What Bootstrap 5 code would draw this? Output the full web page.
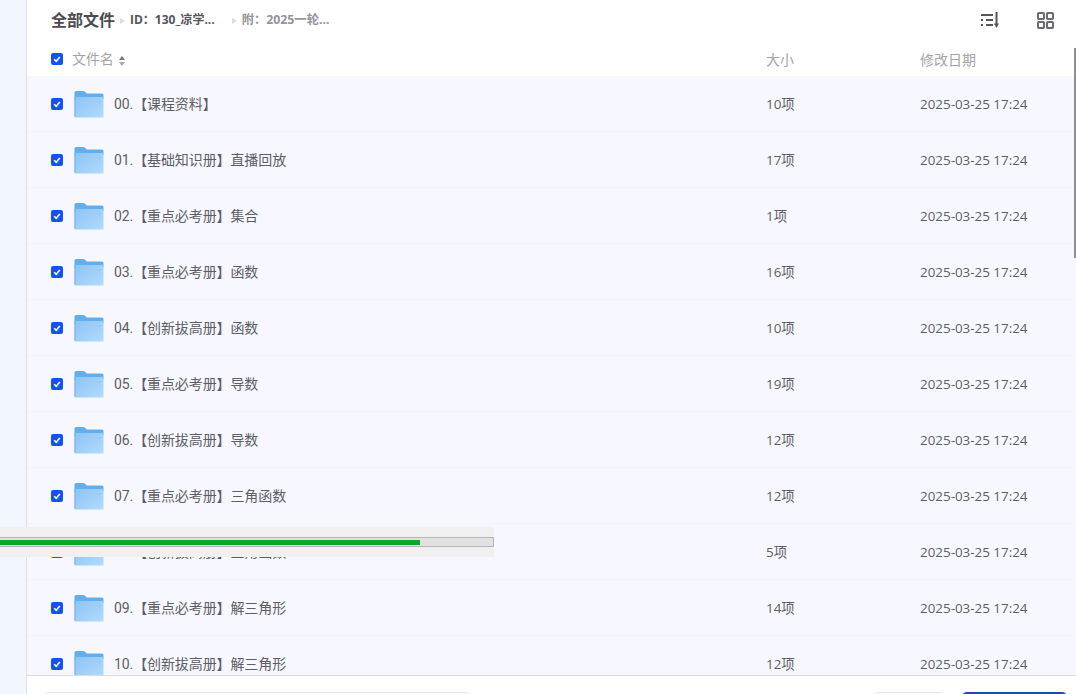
<!DOCTYPE html>
<html lang="zh-CN">
<head>
    <meta charset="UTF-8">
    <meta name="viewport" content="width=device-width, initial-scale=1.0">
    <title>全部文件</title>
    <link href="https://cdn.jsdelivr.net/npm/bootstrap@5.3.0/dist/css/bootstrap.min.css" rel="stylesheet">
    <style>
        html, body { height: 100%; overflow: hidden; }
        body { font-family: "Open Sans", "Noto Sans CJK SC", sans-serif; font-size: 13px; color: #5d5d66; background: #fff; }
        .app-shell { height: 694px; }
        .side-rail { width: 27px; background: #f2f6ff; border-right: 1px solid #e0e0e4; }
        .top-bar { height: 40px; padding: 0 22px 0 24px; }
        .crumb-root { font-size: 16px; font-weight: 700; color: #4b4b50; margin-right: 5px; }
        .crumb-item { font-size: 12px; font-weight: 700; color: #55555c; margin-right: 17px; }
        .crumb-item.muted-crumb { color: #94949a; font-size: 12.3px; }
        .crumb-arrow { width: 0; height: 0; border-top: 3.5px solid transparent; border-bottom: 3.5px solid transparent; border-left: 5px solid #dcdcdc; margin-right: 5px; margin-top: 1px; }
        .file-head { height: 36px; font-size: 14px; color: #a4a4a8; padding-top: 3px; }
        .file-list { height: 599px; overflow: hidden; background: #f7f8ff; }
        .file-row { height: 56px; padding-top: 1px; border-bottom: 1px solid #f3f3fb; }
        .col-check { width: 23px; margin-left: 24px; flex: none; line-height: 0; }
        .col-name { width: 692px; flex: none; white-space: nowrap; font-family: Roboto, "Noto Sans CJK SC", sans-serif; font-size: 14px; letter-spacing: -.1px; }
        .col-size { width: 154px; flex: none; }
        .col-date { flex: none; white-space: nowrap; }
        .file-row .col-size, .file-row .col-date { font-size: 13.4px; }
        .check-box { display: inline-block; width: 12px; height: 12px; border-radius: 2px; background: #1352f7; margin-top: -1px; }
        .folder-icon { width: 30px; height: 28px; margin-right: 10px; flex: none; margin-top: -1px; }
        .head-label { margin-left: -2px; }
        .sort-mark { display: inline-flex; flex-direction: column; gap: 2px; margin-left: 5px; vertical-align: 4px; }
        .sort-mark i { display: block; width: 0; height: 0; border-left: 3.5px solid transparent; border-right: 3.5px solid transparent; }
        .sort-mark i:first-child { border-bottom: 4px solid #777; }
        .sort-mark i:last-child { border-top: 4px solid #aaa; }
        .foot-bar { height: 19px; border-top: 1px solid #dcdce0; overflow: hidden; }
        .foot-input { width: 428px; height: 20px; margin: 16px 0 0 16px; border: 1px solid #e4e4e8; border-radius: 6px; }
        .foot-btn { width: 72px; height: 20px; margin: 16px 0 0; border: 1px solid #e4e4e8; border-radius: 6px; }
        .foot-btn.blue-btn { width: 107px; margin-left: 16px; background: #1f4ab0; border-color: #1f4ab0; }
        .progress-strip { position: absolute; left: 0; top: 527px; width: 494px; height: 30px; background: #f0f0f0; padding-top: 10px; }
        .progress-track { height: 10px; background: #e1e1e1; border: 1px solid #b5b5b5; border-left: 0; }
        .progress-fill { height: 100%; padding: 2px 0 1px; }
        .progress-fill span { display: block; height: 100%; background: #06a82d; }
        .page-scroll { position: absolute; right: 0; top: 48px; width: 2px; height: 210px; background: #8f8f8f; }
        .grid-toggle { margin-left: 37px; }
    </style>
</head>
<body>
    <div class="app-shell d-flex position-relative">
        <div class="side-rail flex-shrink-0"></div>
        <div class="flex-grow-1 d-flex flex-column">
            <div class="top-bar d-flex align-items-center">
                <span class="crumb-root">全部文件</span>
                <span class="crumb-arrow"></span>
                <span class="crumb-item">ID：130_凉学...</span>
                <span class="crumb-arrow"></span>
                <span class="crumb-item muted-crumb">附：2025一轮...</span>
                <svg class="ms-auto" width="19" height="16" viewBox="0 0 19 16" fill="none" stroke="#55555c" stroke-width="2"><path d="M0 3h12M0 8h2M5 8h7M0 13h2M5 13h7M15.5 0v13"/><path d="M13 11.5l2.5 4.5 2.5-4.5z" fill="#55555c" stroke="none"/></svg>
                <svg class="grid-toggle" width="17" height="17" viewBox="0 0 17 17" fill="none" stroke="#6a6a70" stroke-width="2"><rect x="1" y="1" width="6" height="6" rx=".8"/><rect x="10" y="1" width="6" height="6" rx=".8"/><rect x="1" y="10" width="6" height="6" rx=".8"/><rect x="10" y="10" width="6" height="6" rx=".8"/></svg>
            </div>
            <div class="file-head d-flex align-items-center">
                <div class="col-check"><span class="check-box" id="head-check"></span></div>
                <div class="col-name"><span class="head-label">文件名</span><span class="sort-mark"><i></i><i></i></span></div>
                <div class="col-size">大小</div>
                <div class="col-date">修改日期</div>
            </div>
            <div class="file-list" id="file-list"></div>
            <div class="foot-bar d-flex">
                <div class="foot-input"></div>
                <div class="foot-btn ms-auto"></div>
                <div class="foot-btn blue-btn me-2"></div>
            </div>
        </div>
        <div class="progress-strip"><div class="progress-track"><div class="progress-fill" style="width:85.1%"><span></span></div></div></div>
        <div class="page-scroll"></div>
    </div>

    <script>
        const checkSvg = '<svg width="12" height="12" viewBox="0 0 12 12" fill="none" stroke="#fff" stroke-width="1.6"><path d="M3.2 6.2l2 2 3.6-4.2"/></svg>';
        const files = [
            ["00.【课程资料】", "10项"],
            ["01.【基础知识册】直播回放", "17项"],
            ["02.【重点必考册】集合", "1项"],
            ["03.【重点必考册】函数", "16项"],
            ["04.【创新拔高册】函数", "10项"],
            ["05.【重点必考册】导数", "19项"],
            ["06.【创新拔高册】导数", "12项"],
            ["07.【重点必考册】三角函数", "12项"],
            ["08.【创新拔高册】三角函数", "5项"],
            ["09.【重点必考册】解三角形", "14项"],
            ["10.【创新拔高册】解三角形", "12项"]
        ];

        function folderSvg(index) {
            return '<svg class="folder-icon" viewBox="0 0 30 28">' +
                '<defs><linearGradient id="fold' + index + '" x1="0" y1="0" x2="1" y2="1"><stop offset="0" stop-color="#8cc4f5"/><stop offset="1" stop-color="#b2dafd"/></linearGradient></defs>' +
                '<path d="M.5 2.5Q.5 1 2 1H10L13 3.5H28Q29.5 3.5 29.5 4.5V9H.5z" fill="#63aeee"/>' +
                '<path d="M.5 7H28Q29.5 7 29.5 8V27.5H2Q.5 27.5 .5 26z" fill="url(#fold' + index + ')"/>' +
                '<path d="M1 7V27" stroke="#6fb4ee" stroke-width="1"/>' +
                '<rect x="23" y="11" width="4" height="2" fill="#9ccbf3"/>' +
                '</svg>';
        }

        document.getElementById("head-check").innerHTML = checkSvg;
        const fileList = document.getElementById("file-list");
        files.forEach((file, index) => {
            const row = document.createElement("div");
            row.className = "file-row d-flex align-items-center";
            row.innerHTML =
                '<div class="col-check"><span class="check-box">' + checkSvg + '</span></div>' +
                '<div class="col-name d-flex align-items-center">' + folderSvg(index) + '<span>' + file[0] + '</span></div>' +
                '<div class="col-size">' + file[1] + '</div>' +
                '<div class="col-date">2025-03-25 17:24</div>';
            fileList.appendChild(row);
        });
    </script>
    <script src="https://cdn.jsdelivr.net/npm/bootstrap@5.3.0/dist/js/bootstrap.bundle.min.js"></script>
</body>
</html>
